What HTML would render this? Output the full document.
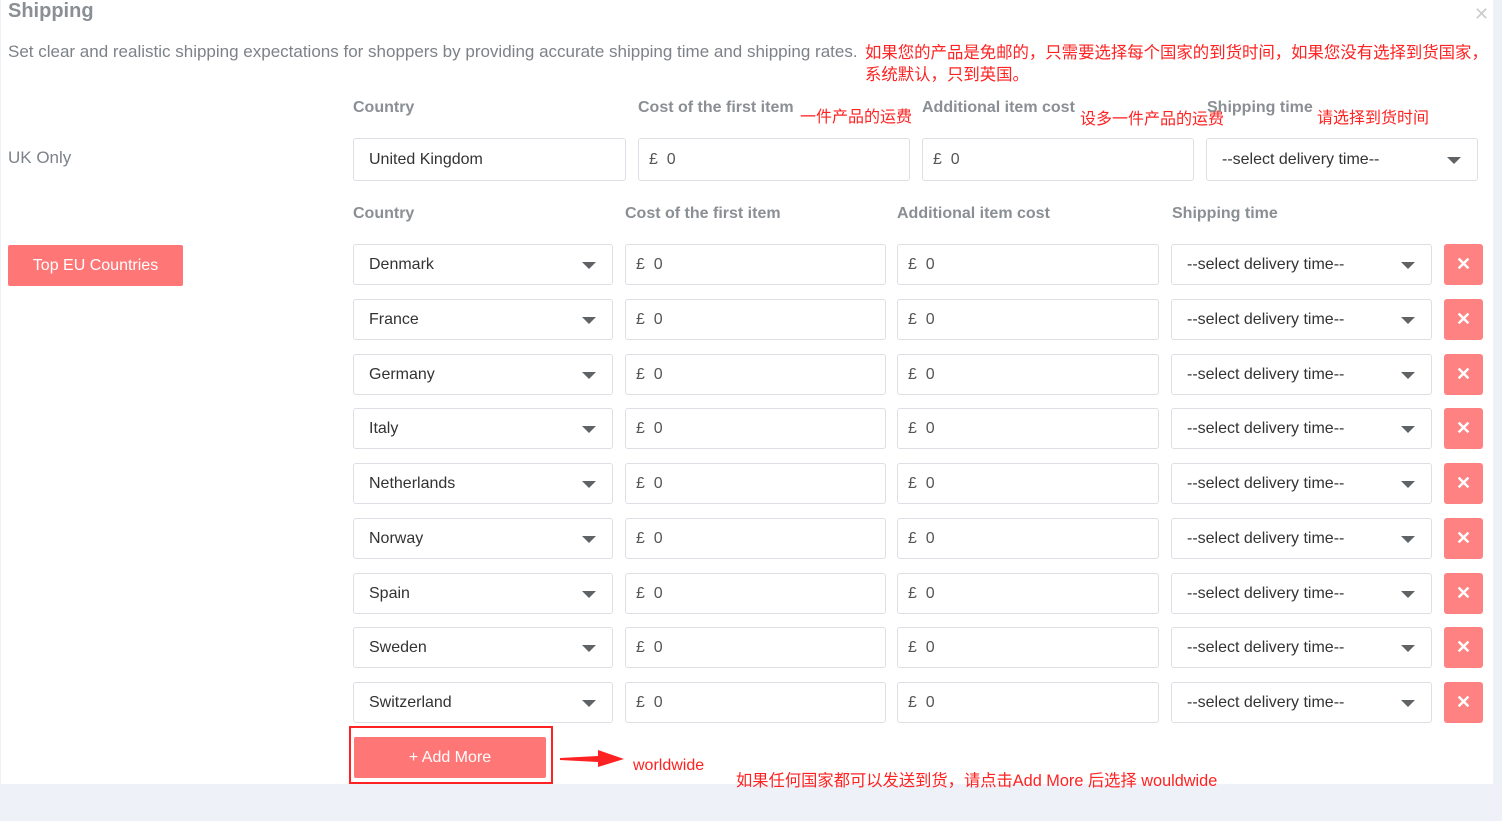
<!DOCTYPE html>
<html><head><meta charset="utf-8"><style>
body{margin:0;width:1502px;height:821px;background:#eef1f8;position:relative;overflow:hidden;font-family:"Liberation Sans","Noto Sans CJK SC",sans-serif;}
.page{position:absolute;left:1px;top:0;width:1492px;height:784px;background:#fff;}
.a{position:absolute;white-space:nowrap;}
.h{color:#8a8f94;font-weight:bold;font-size:16px;}
.in{position:absolute;box-sizing:border-box;border:1px solid #dcdfe3;border-radius:3px;background:#fff;color:#333;font-size:16px;padding-left:15px;display:flex;align-items:center;}
.in.p{padding-left:10px;color:#555}
.car{position:absolute;right:16px;top:50%;margin-top:-3px;width:0;height:0;border-left:7px solid transparent;border-right:7px solid transparent;border-top:7px solid #5f6366;}
.x{position:absolute;width:39px;height:41px;background:#ff8282;border-radius:3px;color:#fff;font-size:18px;font-weight:bold;display:flex;align-items:center;justify-content:center;}
.r{color:#f22;font-size:16px;}
</style></head><body>
<div class="page"></div>
<div class="a" style="left:8px;top:0;font-size:20px;font-weight:bold;color:#8a8f94">Shipping</div>
<div class="a" style="left:1474px;top:4px;font-size:18px;color:#ccc">✕</div>
<div class="a" style="left:8px;top:42px;font-size:17px;color:#7d8288">Set clear and realistic shipping expectations for shoppers by providing accurate shipping time and shipping rates.</div>
<div class="a r" style="left:865px;top:39px;font-size:16.4px">如果您的产品是免邮的，只需要选择每个国家的到货时间，如果您没有选择到货国家，</div>
<div class="a r" style="left:865px;top:61px;font-size:16.4px">系统默认，只到英国。</div>
<div class="a h" style="left:353px;top:99px">Country</div>
<div class="a h" style="left:638px;top:99px">Cost of the first item</div>
<div class="a r" style="left:800px;top:103px">一件产品的运费</div>
<div class="a h" style="left:922px;top:99px">Additional item cost</div>
<div class="a r" style="left:1080px;top:105px">设多一件产品的运费</div>
<div class="a h" style="left:1207px;top:99px">Shipping time</div>
<div class="a r" style="left:1317px;top:104px">请选择到货时间</div>
<div class="a" style="left:8px;top:148px;font-size:17px;color:#7d8288">UK Only</div>
<div class="in" style="left:353px;top:138px;width:273px;height:43px">United Kingdom</div>
<div class="in p" style="left:638px;top:138px;width:272px;height:43px">£&nbsp; 0</div>
<div class="in p" style="left:922px;top:138px;width:272px;height:43px">£&nbsp; 0</div>
<div class="in" style="left:1206px;top:138px;width:272px;height:43px">--select delivery time--<span class="car"></span></div>
<div class="a h" style="left:353px;top:205px">Country</div>
<div class="a h" style="left:625px;top:205px">Cost of the first item</div>
<div class="a h" style="left:897px;top:205px">Additional item cost</div>
<div class="a h" style="left:1172px;top:205px">Shipping time</div>
<div class="a" style="left:8px;top:245px;width:175px;height:41px;background:#ff7676;border-radius:2px;color:#fff;font-size:16px;display:flex;align-items:center;justify-content:center">Top EU Countries</div>
<div id="rows"></div>
<div class="a" style="left:349px;top:726px;width:204px;height:58px;border:2px solid #f22;box-sizing:border-box"></div>
<div class="a" style="left:354px;top:737px;width:192px;height:41px;background:#ff7676;border-radius:2px;color:#fff;font-size:16px;display:flex;align-items:center;justify-content:center">+ Add More</div>
<svg class="a" style="left:560px;top:750px" width="66" height="18"><polygon points="0,8 38,6 38,0 64,9 38,17 38,12 0,10" fill="#f22"/></svg>
<div class="a r" style="left:633px;top:757px">worldwide</div>
<div class="a r" style="left:736px;top:767px;font-size:16.3px">如果任何国家都可以发送到货，请点击Add More 后选择 wouldwide</div>
<script>
var c=["Denmark","France","Germany","Italy","Netherlands","Norway","Spain","Sweden","Switzerland"],h="";
c.forEach(function(n,i){var y=Math.round(244+i*54.75);
h+='<div class="in" style="left:353px;top:'+y+'px;width:260px;height:41px">'+n+'<span class="car"></span></div>'+
'<div class="in p" style="left:625px;top:'+y+'px;width:261px;height:41px">£&nbsp; 0</div>'+
'<div class="in p" style="left:897px;top:'+y+'px;width:262px;height:41px">£&nbsp; 0</div>'+
'<div class="in" style="left:1171px;top:'+y+'px;width:261px;height:41px">--select delivery time--<span class="car"></span></div>'+
'<div class="x" style="left:1444px;top:'+y+'px">✕</div>';});
document.getElementById("rows").innerHTML=h;
</script>
</body></html>
